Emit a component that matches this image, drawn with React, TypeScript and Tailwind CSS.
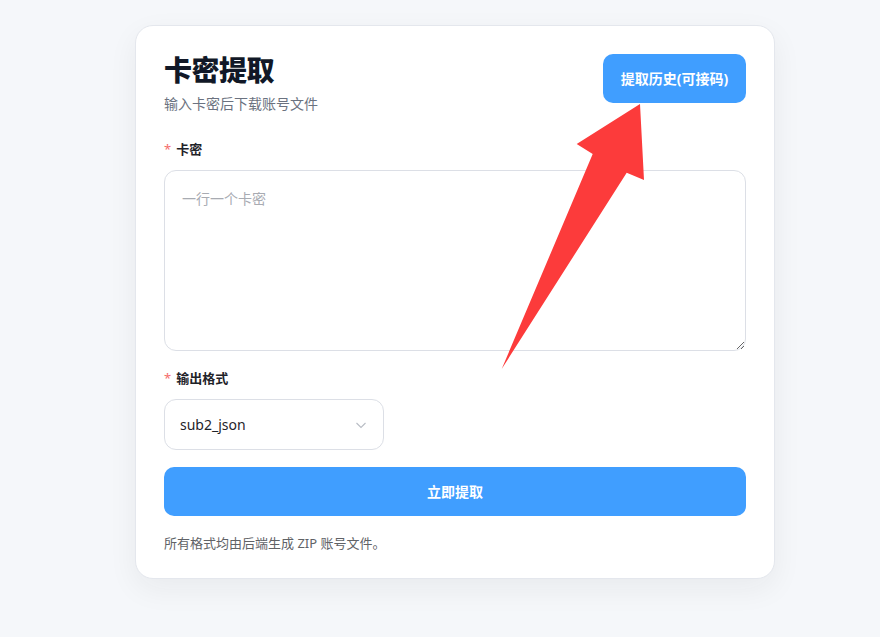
import React from "react";

const font = { fontFamily: '"Noto Sans", "Noto Sans CJK SC", sans-serif' };

function Label({ text }: { text: string }) {
  return (
    <div className="flex items-center h-5 text-[13px] font-bold text-[#1f2329] leading-5">
      <span className="text-[#f56c6c] mr-[5px] font-normal">*</span>
      <span>{text}</span>
    </div>
  );
}

export default function App() {
  return (
    <div className="relative min-h-[637px] w-full bg-[#f5f7fa]" style={font}>
      <div className="pl-[135px] pt-[25px]">
        <div className="w-[640px] rounded-[18px] border border-[#e4e7ed] bg-white px-[28px] pt-[28px] pb-[25px] shadow-[0_10px_30px_rgba(31,35,41,0.06)]">
          {/* header */}
          <div className="flex items-start justify-between">
            <div>
              <h1 className="text-[28px] leading-[32px] font-extrabold text-[#111827] tracking-[-0.5px]">卡密提取</h1>
              <p className="mt-2 text-[14px] leading-5 text-[#6b7280]">输入卡密后下载账号文件</p>
            </div>
            <button className="h-[49px] w-[143px] rounded-[10px] bg-[#409eff] text-[14px] font-bold text-white">
              提取历史(可接码)
            </button>
          </div>

          {/* card codes */}
          <div className="mt-[25px]">
            <Label text="卡密" />
            <textarea
              className="mt-[11px] block h-[181px] w-full resize-y rounded-[12px] border border-[#dcdfe6] px-[17px] py-[18px] text-[14px] leading-5 text-[#1f2329] outline-none placeholder:text-[#a8abb2]"
              placeholder="一行一个卡密"
            />
          </div>

          {/* output format */}
          <div className="mt-[17px]">
            <Label text="输出格式" />
            <div className="mt-[11px] flex h-[51px] w-[220px] items-center justify-between rounded-[12px] border border-[#dcdfe6] pl-[15px] pr-[16px]">
              <span className="text-[14px] text-[#1f2329]">sub2_json</span>
              <svg width="12" height="12" viewBox="0 0 12 12" fill="none">
                <path d="M1.5 4 L6 8.5 L10.5 4" stroke="#b8bcc4" strokeWidth="1.1" />
              </svg>
            </div>
          </div>

          <button className="mt-[17px] h-[49px] w-full rounded-[10px] bg-[#409eff] text-[14px] font-bold text-white">
            立即提取
          </button>

          <p className="mt-[17px] text-[13px] leading-5 text-[#606266]">所有格式均由后端生成 ZIP 账号文件。</p>
        </div>
      </div>

      {/* pointer arrow drawn over the card */}
      <svg className="pointer-events-none absolute left-0 top-0" width="880" height="637" viewBox="0 0 880 637">
        <polygon
          points="640,104 576.7,144 592.7,154 501.7,369 626.7,172.7 644,180"
          fill="#fc3b3b"
        />
      </svg>
    </div>
  );
}
